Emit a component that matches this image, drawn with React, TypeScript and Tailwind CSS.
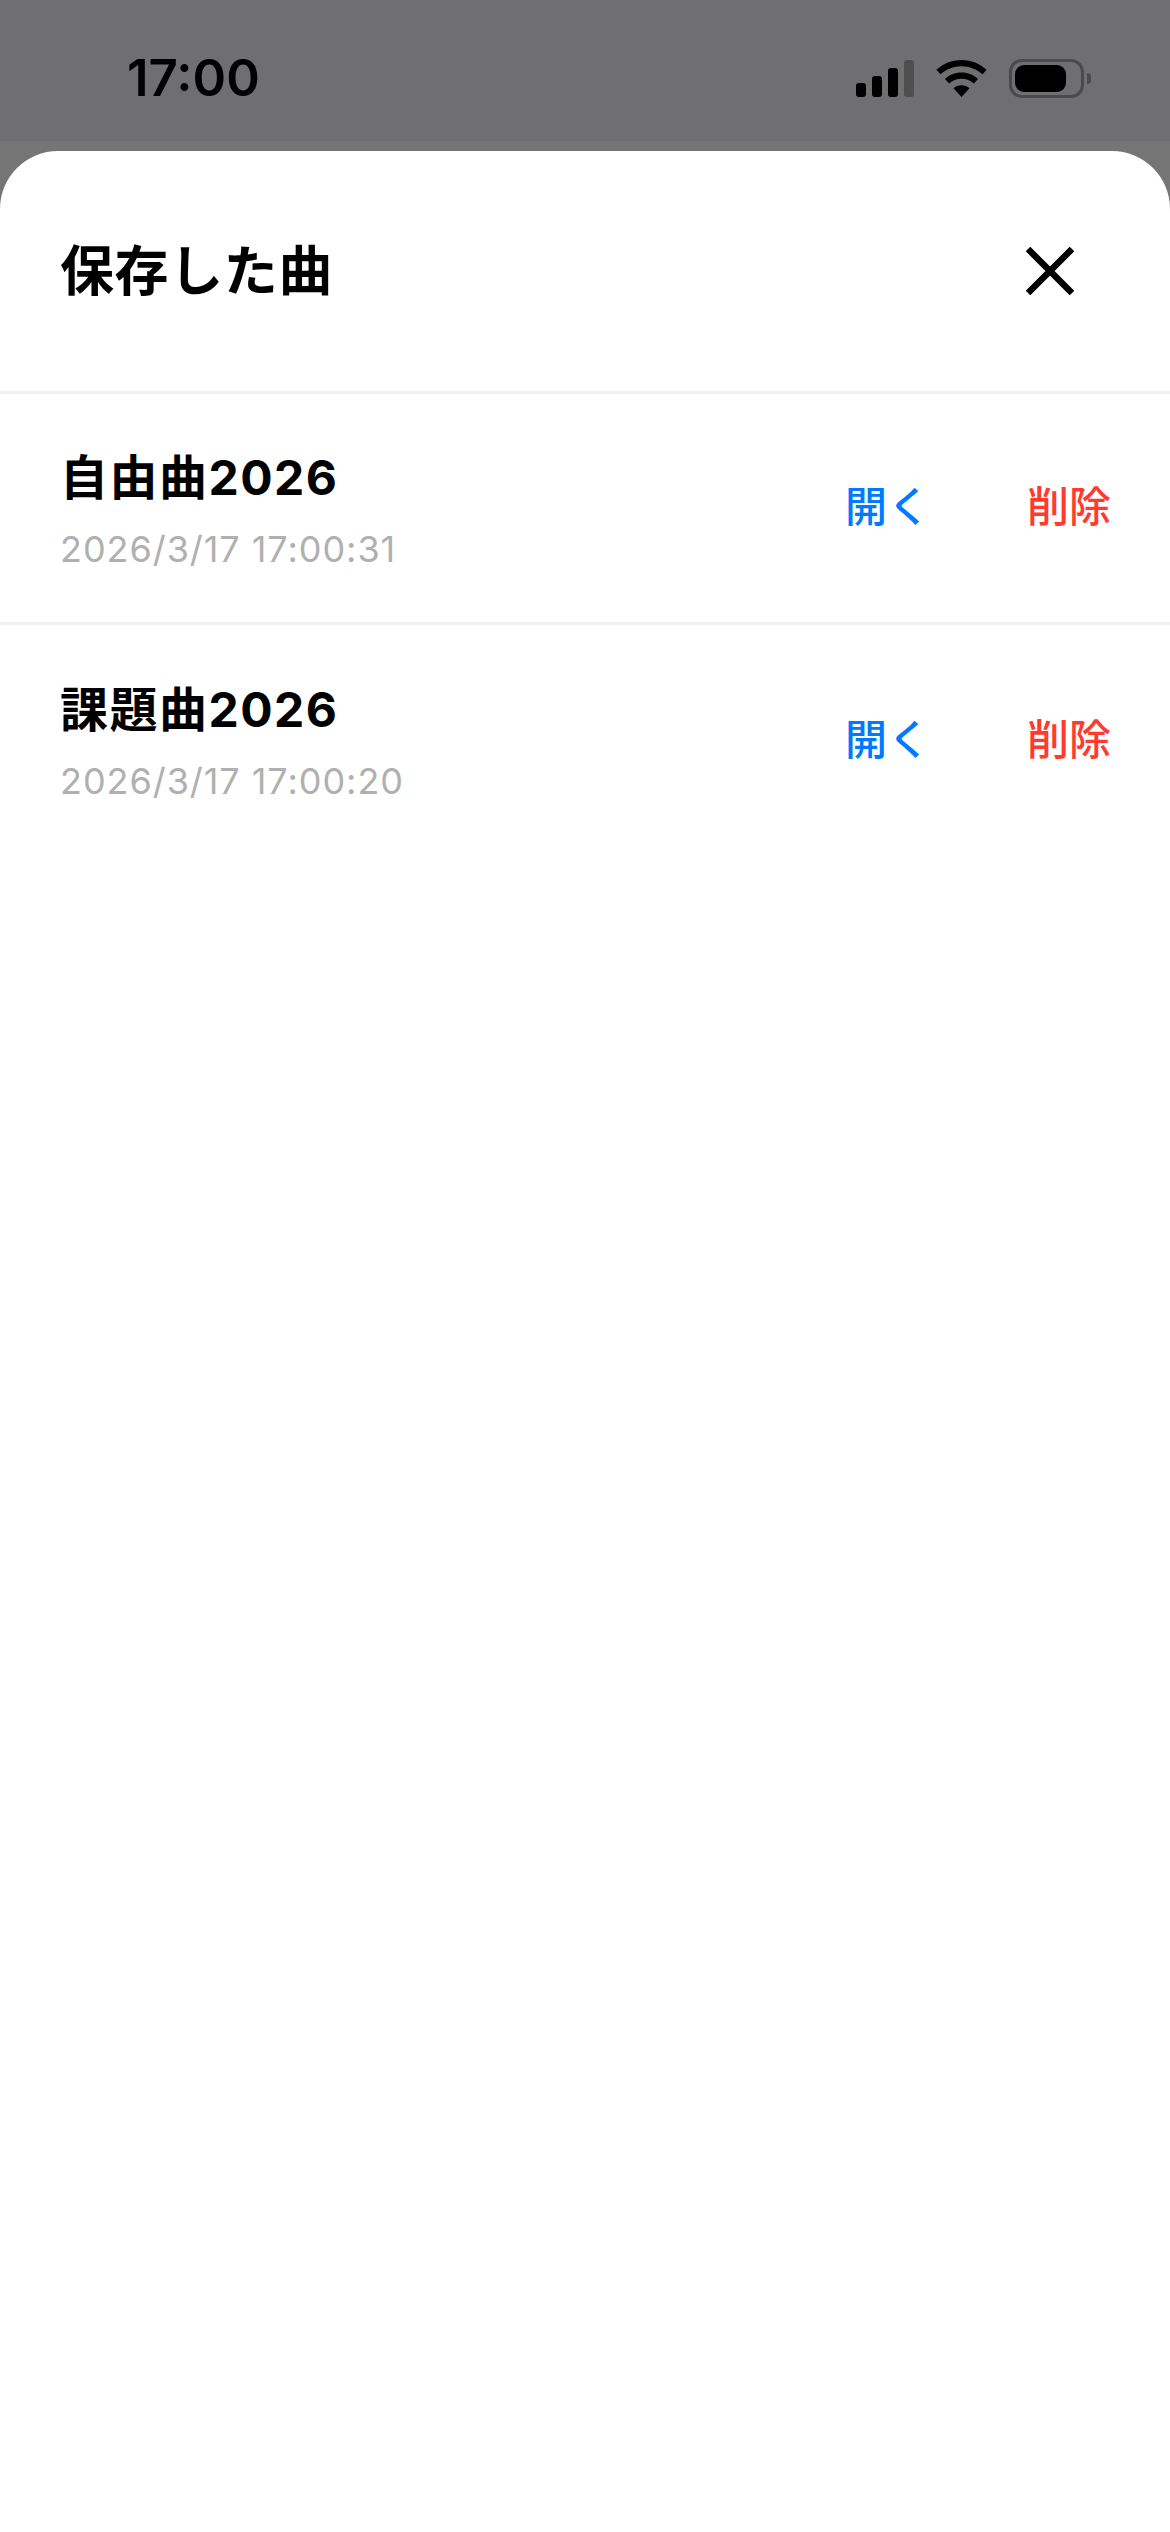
import React from 'react';

const songs = [
  { title: '自由曲2026', savedAt: '2026/3/17 17:00:31' },
  { title: '課題曲2026', savedAt: '2026/3/17 17:00:20' }
];

function StatusIcons() {
  return (
    <div className="flex items-center">
      {/* Signal */}
      <div className="flex h-[37px] w-[58px] items-end gap-[6px]">
        <div className="h-[14px] w-[10px] rounded-[3px] bg-black" />
        <div className="h-[21px] w-[10px] rounded-[3px] bg-black" />
        <div className="h-[29px] w-[10px] rounded-[3px] bg-black" />
        <div className="h-[37px] w-[10px] rounded-[3px] bg-[#4f4f50]" />
      </div>
      {/* Wifi */}
      <svg className="ml-[22px]" width="51" height="37" viewBox="0 0 51 37" aria-hidden="true">
        <path d="M25.5 0C15.8 0 7 3.7 0.4 9.8L4.6 14.3C10 9.3 17.4 6.2 25.5 6.2S41 9.3 46.4 14.3L50.6 9.8C44 3.7 35.2 0 25.5 0Z" fill="#000" />
        <path d="M25.5 12.6C19.1 12.6 13.3 15 9 19L13.2 23.5C16.4 20.6 20.7 18.8 25.5 18.8S34.6 20.6 37.8 23.5L42 19C37.7 15 31.9 12.6 25.5 12.6Z" fill="#000" />
        <path d="M25.5 25.2C22.4 25.2 19.6 26.4 17.5 28.3L25.5 37L33.5 28.3C31.4 26.4 28.6 25.2 25.5 25.2Z" fill="#000" />
      </svg>
      {/* Battery */}
      <div className="ml-[22px] flex items-center">
        <div className="h-[39px] w-[75px] rounded-[13px] border-[3px] border-[#4a4a4b] p-[3px]">
          <div className="h-full w-[51px] rounded-[9px] bg-black" />
        </div>
        <div className="ml-[3px] h-[11px] w-[4px] rounded-r-full bg-[#4a4a4b]" />
      </div>
    </div>
  );
}

function SongRow({ title, savedAt }: { title: string; savedAt: string }) {
  return (
    <div className="flex h-[231px] items-center justify-between border-b-[3px] border-[#efefef] last:border-b-0">
      <div className="pl-[60px]">
        <p className="text-[48px] leading-[64px] font-bold tracking-[1.5px] text-black">{title}</p>
        <p className="mt-[17px] text-[36px] leading-[44px] font-normal tracking-[0.95px] text-[#b0b0b0]">{savedAt}</p>
      </div>
      <div className="flex items-center pb-[3px] pr-[59px] text-[42px] font-medium">
        <button className="w-[182px] text-left tracking-[1px] text-[#007aff]">開く</button>
        <button className="text-[#ff3b30]">削除</button>
      </div>
    </div>
  );
}

export default function App() {
  return (
    <div className="flex h-[2532px] w-[1170px] flex-col overflow-hidden bg-[#757575] font-['Inter','Noto_Sans_CJK_JP',sans-serif]">
      <div className="flex h-[141px] shrink-0 items-start justify-between bg-[#6f6f71] pl-[127px] pr-[79px] pt-[48px]">
        <span className="text-[51px] leading-[60px] font-semibold text-black">17:00</span>
        <div className="pt-[11px]">
          <StatusIcons />
        </div>
      </div>
      <div className="mt-[10px] flex-1 rounded-t-[58px] bg-white">
        <header className="flex h-[243px] items-center justify-between border-b-[3px] border-[#efefef] pl-[60px] pr-[96px]">
          <h1 className="pt-[2px] text-[54px] leading-[64px] font-semibold tracking-[0.6px] text-black">保存した曲</h1>
          <button aria-label="閉じる">
            <svg width="48" height="48" viewBox="0 0 48 48" aria-hidden="true" className="block">
              <path d="M2 2L46 46M46 2L2 46" stroke="#000" strokeWidth="6.5" fill="none" />
            </svg>
          </button>
        </header>
        <div className="flex flex-col">
          {songs.map((song) => (
            <SongRow key={song.title} title={song.title} savedAt={song.savedAt} />
          ))}
        </div>
      </div>
    </div>
  );
}
